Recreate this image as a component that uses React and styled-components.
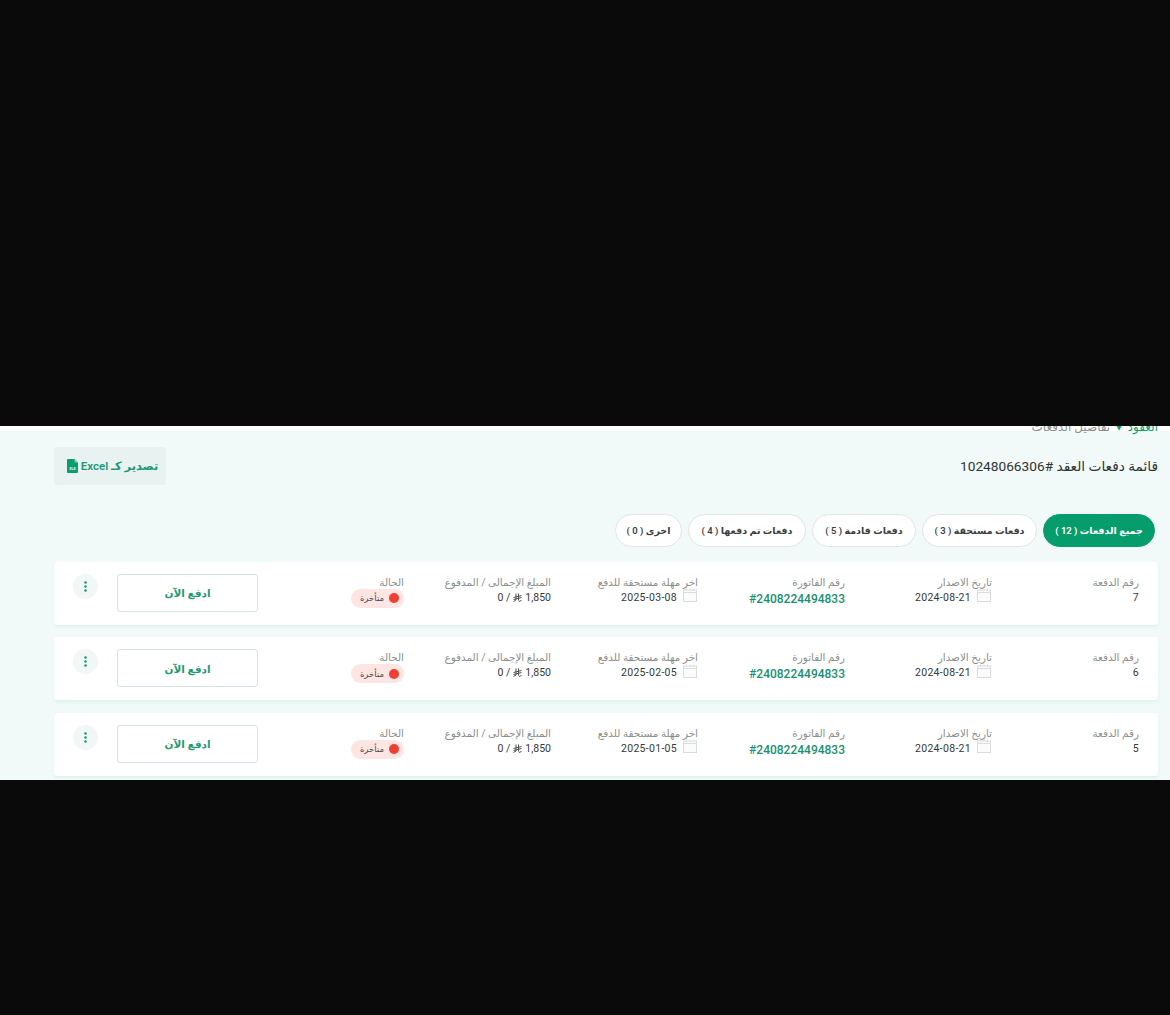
import React from "react";
import styled, { createGlobalStyle } from "styled-components";

const GlobalStyle = createGlobalStyle`
  html, body { margin: 0; padding: 0; background: #0a0a0a; }
  * { box-sizing: border-box; }
  body { font-family: Roboto, "DejaVu Sans", sans-serif; }
`;

const tabs = [
  { label: "جميع الدفعات ( 12 )", width: 112, active: true },
  { label: "دفعات مستحقة ( 3 )", width: 115 },
  { label: "دفعات قادمة ( 5 )", width: 104 },
  { label: "دفعات تم دفعها ( 4 )", width: 118 },
  { label: "اخرى ( 0 )", width: 67 },
];

const payments = [
  { no: "7", due: "2025-03-08" },
  { no: "6", due: "2025-02-05" },
  { no: "5", due: "2025-01-05" },
];

const Screen = styled.div`
  display: grid;
  grid-template-rows: 426px 354px 235px;
  width: 1170px;
  height: 1015px;
  background: #0a0a0a;
`;

const Band = styled.div`
  background: #0a0a0a;
`;

const Page = styled.main`
  direction: rtl;
  overflow: hidden;
  padding: 0 12px 0 54px;
  background: linear-gradient(#ffffff 5px, #f2faf9 5px);
`;

const Breadcrumb = styled.nav`
  display: flex;
  align-items: flex-end;
  gap: 6px;
  height: 10px;
  overflow: hidden;
  font-size: 12px;
  line-height: 17px;
  color: #8a8f8e;
`;

const CrumbLink = styled.span`
  color: #0f9d6e;
  font-weight: 500;
`;

const CrumbArrow = styled.span`
  color: #0f9d6e;
  font-size: 7px;
  line-height: 15px;
`;

const TitleRow = styled.header`
  display: flex;
  align-items: center;
  justify-content: space-between;
  height: 38px;
  margin-top: 11px;
`;

const Title = styled.h1`
  margin: 0;
  font-size: 13.7px;
  font-weight: 400;
  color: #2f3433;
`;

const ExportButton = styled.button`
  display: flex;
  align-items: center;
  justify-content: center;
  gap: 3px;
  width: 112px;
  height: 38px;
  padding: 0 0 0 5px;
  border: 0;
  border-radius: 3px;
  background: #e8f3f1;
  color: #1f9a75;
  font-family: inherit;
  font-size: 11.5px;
  font-weight: 600;
`;

const TabBar = styled.div`
  display: flex;
  gap: 6px;
  margin-top: 29px;
  padding-right: 3px;
`;

const Tab = styled.button`
  width: ${(p) => p.$width}px;
  height: 33px;
  padding: 0;
  border: 1px solid ${(p) => (p.$active ? "#069c6c" : "#dfe6e5")};
  border-radius: 17px;
  background: ${(p) => (p.$active ? "#069c6c" : "#ffffff")};
  color: ${(p) => (p.$active ? "#ffffff" : "#3d4241")};
  font-family: inherit;
  font-size: 9.5px;
  font-weight: 600;
`;

const CardList = styled.div`
  display: flex;
  flex-direction: column;
  gap: 12.5px;
  margin-top: 14.9px;
`;

const Card = styled.article`
  display: flex;
  flex: none;
  height: 63px;
  padding: 13px 19px 0;
  border-radius: 3px;
  background: #ffffff;
  box-shadow: 0 2px 3px rgba(120, 190, 175, 0.14);
`;

const Column = styled.div`
  display: flex;
  flex-direction: column;
  width: 147px;
  flex: none;
`;

const Label = styled.div`
  height: 15px;
  font-size: 10.4px;
  line-height: 15px;
  color: #8b8f8e;
`;

const Value = styled.div`
  display: flex;
  align-items: center;
  gap: 6px;
  height: 15px;
  font-size: 10.5px;
  line-height: 15px;
  letter-spacing: 0.3px;
  color: #34393a;
`;

const InvoiceLink = styled.div`
  direction: ltr;
  align-self: flex-start;
  margin-top: 1px;
  font-size: 12px;
  font-weight: 500;
  line-height: 17px;
  color: #1a8f6e;
`;

const Amount = styled.div`
  display: flex;
  align-items: center;
  gap: 3px;
  height: 15px;
  font-size: 10.5px;
  color: #34393a;
`;

const StatusBadge = styled.div`
  display: flex;
  align-items: center;
  gap: 5px;
  align-self: flex-start;
  width: 53px;
  height: 19px;
  margin-top: -1px;
  padding-right: 5px;
  border-radius: 10px;
  background: #fde5e3;
  font-size: 8.5px;
  color: #4a4a4a;
`;

const StatusDot = styled.span`
  flex: none;
  width: 10px;
  height: 10px;
  border-radius: 50%;
  background: #f23d33;
`;

const ActionsCell = styled.div`
  display: flex;
  gap: 19px;
  margin: -1px -1px 0 0;
`;

const PayButton = styled.button`
  width: 141px;
  height: 38px;
  padding: 2px 0 0;
  border: 1px solid #d5e6e2;
  border-radius: 3px;
  background: #ffffff;
  color: #1f9a75;
  font-family: inherit;
  font-size: 10.5px;
  font-weight: 600;
`;

const MenuButton = styled.button`
  display: flex;
  align-items: center;
  justify-content: center;
  width: 25px;
  height: 25px;
  padding: 0;
  border: 0;
  border-radius: 50%;
  background: #f1f7f6;
`;

const CalendarSvg = styled.svg`
  flex: none;
  margin: -4px 1px 0 0;
`;

function CalendarIcon() {
  return (
    <CalendarSvg width="14" height="14" viewBox="0 0 14 14" fill="none" stroke="#d9dcdc" strokeWidth="1">
      <rect x="0.5" y="2" width="13" height="11.5" fill="#fbfbfb" />
      <path d="M0.5 4.5h13M3.5 0.5v2M10.5 0.5v2M7 0.5v2" />
    </CalendarSvg>
  );
}

function XlsIcon() {
  return (
    <svg width="11" height="14" viewBox="0 0 11 14">
      <path d="M1 0h6.5L11 3.5V13a1 1 0 0 1-1 1H1a1 1 0 0 1-1-1V1a1 1 0 0 1 1-1z" fill="#0a9d6e" />
      <path d="M7.5 0v3.5H11z" fill="#7fd0b4" />
      <text x="5.5" y="10.5" fontSize="3.6" fill="#ffffff" textAnchor="middle" fontFamily="Roboto">XLS</text>
    </svg>
  );
}

function RiyalIcon() {
  return (
    <svg width="9" height="9" viewBox="0 0 9 9" fill="none" stroke="#4a4f4e" strokeWidth="1">
      <path d="M3 0.5v6.5L0.5 8.5M5.5 0.5v7M0.5 4.5l8-2M0.5 6.5l8-2M6 8.5l2.5-1" />
    </svg>
  );
}

function DotsIcon() {
  return (
    <svg width="3" height="11" viewBox="0 0 3 11" fill="#1f9a75">
      <circle cx="1.5" cy="1.5" r="1.3" />
      <circle cx="1.5" cy="5.5" r="1.3" />
      <circle cx="1.5" cy="9.5" r="1.3" />
    </svg>
  );
}

function PaymentCard({ payment }) {
  return (
    <Card>
      <Column>
        <Label>رقم الدفعة</Label>
        <Value>{payment.no}</Value>
      </Column>
      <Column>
        <Label>تاريخ الاصدار</Label>
        <Value>
          <CalendarIcon />
          2024-08-21
        </Value>
      </Column>
      <Column>
        <Label>رقم الفاتورة</Label>
        <InvoiceLink>#2408224494833</InvoiceLink>
      </Column>
      <Column>
        <Label>اخر مهلة مستحقة للدفع</Label>
        <Value>
          <CalendarIcon />
          {payment.due}
        </Value>
      </Column>
      <Column>
        <Label>المبلغ الإجمالى / المدفوع</Label>
        <Amount>
          <span>1,850</span>
          <RiyalIcon />
          <span>/ 0</span>
        </Amount>
      </Column>
      <Column>
        <Label>الحالة</Label>
        <StatusBadge>
          <StatusDot />
          متأخرة
        </StatusBadge>
      </Column>
      <ActionsCell>
        <PayButton>ادفع الآن</PayButton>
        <MenuButton>
          <DotsIcon />
        </MenuButton>
      </ActionsCell>
    </Card>
  );
}

export default function App() {
  return (
    <>
      <GlobalStyle />
      <Screen>
        <Band />
        <Page>
          <Breadcrumb>
            <CrumbLink>العقود</CrumbLink>
            <CrumbArrow>▼</CrumbArrow>
            <span>تفاصيل الدفعات</span>
          </Breadcrumb>
          <TitleRow>
            <Title>قائمة دفعات العقد #10248066306</Title>
            <ExportButton>
              تصدير كـ Excel
              <XlsIcon />
            </ExportButton>
          </TitleRow>
          <TabBar>
            {tabs.map((tab) => (
              <Tab key={tab.label} $width={tab.width} $active={tab.active}>
                {tab.label}
              </Tab>
            ))}
          </TabBar>
          <CardList>
            {payments.map((payment) => (
              <PaymentCard key={payment.no} payment={payment} />
            ))}
          </CardList>
        </Page>
        <Band />
      </Screen>
    </>
  );
}
